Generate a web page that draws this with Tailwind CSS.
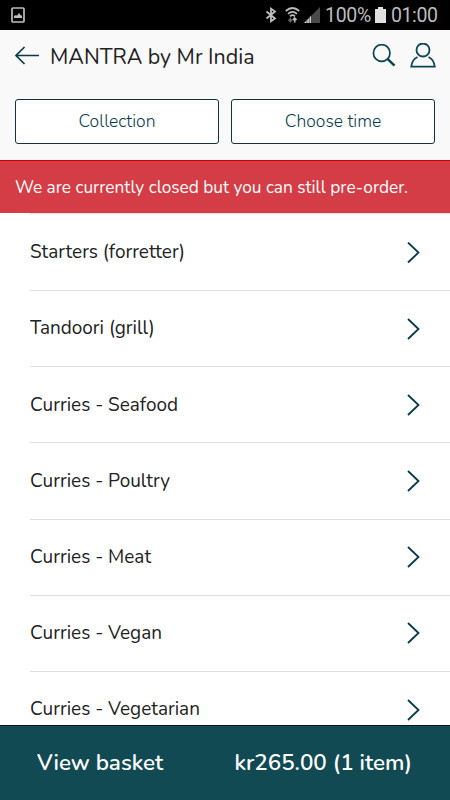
<!DOCTYPE html>
<html lang="en">
<head>
<meta charset="utf-8">
<title>MANTRA by Mr India</title>
<script src="https://cdn.jsdelivr.net/npm/@tailwindcss/browser@4"></script>
</head>
<body class="bg-white">
<div class="flex h-[800px] w-[450px] flex-col overflow-hidden bg-white font-['Nunito','Open_Sans',sans-serif] text-[#222]">
  <div class="flex h-[30px] shrink-0 items-center bg-black pl-[11px] pr-[12px] text-[#bdbdbd]">
    <svg class="h-4 w-[14px]" viewBox="0 0 14 16" fill="none"><rect x="1" y="1" width="12" height="14" rx="1" stroke="#bdbdbd" stroke-width="1.700"/><path d="M3 11V9l2-1 1 .7L8 6l1.400 2L11 8.700V11z" fill="#bdbdbd"/></svg>
    <svg class="ml-auto h-4 w-3" viewBox="0 0 12 16" fill="none" stroke="#bdbdbd" stroke-width="1.800"><path d="M1.500 4.500l8.500 7L6 14.300V1.700l4 2.800-8.500 7"/></svg>
    <svg class="ml-[8px] h-4 w-[15px]" viewBox="0 0 15 16" fill="none" stroke="#bdbdbd" stroke-width="1.700"><path d="M.8 4Q7.500-2 14.200 4M3 6.800q4.500-4 9 0M5 9.400q2.500-2.400 5 0"/><path d="M5.300 10.500v4M3.500 12.500l1.800 2 1.800-2" stroke="#666" stroke-width="1.600"/><path d="M9.700 15.500v-4M7.900 13l1.800-2 1.800 2" stroke-width="1.600"/></svg>
    <svg class="ml-[4px] h-4 w-4" viewBox="0 0 16 16"><path d="M16 0v16H0z" fill="#4a4a4a"/><path d="M7 9v7H0z" fill="#c8c8c8"/><path d="M2.800 12v4M5.300 9v7" stroke="#333" stroke-width=".6"/></svg>
    <span class="ml-[5px] mt-px w-[46px] whitespace-nowrap font-[Roboto] text-[19.500px] leading-[30px] tracking-[-0.300px]">100%</span>
    <svg class="ml-[4px] h-4 w-[11px]" viewBox="0 0 11 16"><path d="M3 0h5v2h3v14H0V2h3z" fill="#e0e0e0"/></svg>
    <span class="ml-[5px] mt-px w-[47px] whitespace-nowrap font-[Roboto] text-[19.500px] leading-[30px] tracking-[-0.400px]">01:00</span>
  </div>

  <header class="flex h-[130px] shrink-0 flex-col bg-[#f9f9f9]">
    <div class="flex h-[51px] items-center pl-[14px] pr-[14px]">
      <svg class="h-[20px] w-[26px]" viewBox="0 0 26 20" fill="none" stroke="#073b4b" stroke-width="1.700"><path d="M25 9.500H2M10.500 1L2 9.500l8.500 8.500"/></svg>
      <h1 class="ml-[10px] mt-[2px] whitespace-nowrap text-[21.400px] leading-[30px]">MANTRA by Mr India</h1>
      <svg class="ml-auto h-[24px] w-[24px]" viewBox="0 0 24 24" fill="none" stroke="#0b4552"><circle cx="9.700" cy="9" r="8.300" stroke-width="1.700"/><path d="M15.500 14.800l7 6.900" stroke-width="2.500"/></svg>
      <svg class="ml-[14px] h-[26px] w-[26px]" viewBox="0 0 26 26" fill="none" stroke="#0b4552" stroke-width="1.800"><circle cx="13" cy="7" r="6.500"/><path d="M7.500 14Q2 16.500 1.300 23.600H24.700Q24 16.500 18.500 14"/></svg>
    </div>
    <div class="mt-[18px] flex h-[45px] gap-[12px] px-[15px] text-[17.500px] font-light text-[#073b4b]">
      <button class="flex-1 rounded-[3px] border border-[#14323b] bg-white">Collection</button>
      <button class="flex-1 rounded-[3px] border border-[#14323b] bg-white">Choose time</button>
    </div>
  </header>

  <p class="flex h-[53px] shrink-0 items-center whitespace-nowrap border-t border-[#d0000b] bg-[#d43d45] px-[15px] pt-px text-[17.250px] text-white">We are currently closed but you can still pre-order.</p>

  <ul class="ml-[30px] min-h-0 flex-1 overflow-hidden border-t border-[#e4dede] text-[18.950px]">
    <li class="flex h-[77px] items-center justify-between border-b border-[#dedede] pr-[30px] pt-px"><span>Starters (forretter)</span><svg class="h-[22px] w-[13px]" viewBox="0 0 13 22" fill="none" stroke="#073b4b" stroke-width="1.800"><path d="M1 .5l10.500 10L1 20.500"/></svg></li>
    <li class="flex h-[76.200px] items-center justify-between border-b border-[#dedede] pr-[30px]"><span>Tandoori (grill)</span><svg class="h-[22px] w-[13px]" viewBox="0 0 13 22" fill="none" stroke="#073b4b" stroke-width="1.800"><path d="M1 1l10.500 10L1 21"/></svg></li>
    <li class="flex h-[76.200px] items-center justify-between border-b border-[#dedede] pr-[30px]"><span>Curries - Seafood</span><svg class="h-[22px] w-[13px]" viewBox="0 0 13 22" fill="none" stroke="#073b4b" stroke-width="1.800"><path d="M1 1l10.500 10L1 21"/></svg></li>
    <li class="flex h-[76.200px] items-center justify-between border-b border-[#dedede] pr-[30px]"><span>Curries - Poultry</span><svg class="h-[22px] w-[13px]" viewBox="0 0 13 22" fill="none" stroke="#073b4b" stroke-width="1.800"><path d="M1 1l10.500 10L1 21"/></svg></li>
    <li class="flex h-[76.200px] items-center justify-between border-b border-[#dedede] pr-[30px]"><span>Curries - Meat</span><svg class="h-[22px] w-[13px]" viewBox="0 0 13 22" fill="none" stroke="#073b4b" stroke-width="1.800"><path d="M1 1l10.500 10L1 21"/></svg></li>
    <li class="flex h-[76.200px] items-center justify-between border-b border-[#dedede] pr-[30px]"><span>Curries - Vegan</span><svg class="h-[22px] w-[13px]" viewBox="0 0 13 22" fill="none" stroke="#073b4b" stroke-width="1.800"><path d="M1 1l10.500 10L1 21"/></svg></li>
    <li class="flex h-[76.200px] items-center justify-between border-b border-[#dedede] pr-[30px]"><span>Curries - Vegetarian</span><svg class="h-[22px] w-[13px]" viewBox="0 0 13 22" fill="none" stroke="#073b4b" stroke-width="1.800"><path d="M1 1l10.500 10L1 21"/></svg></li>
  </ul>

  <footer class="flex h-[75px] shrink-0 items-center justify-between whitespace-nowrap border-t border-[#001820] bg-[#124a53] pl-[37px] pr-[38px] text-[22.400px] font-semibold text-white">
    <span>View basket</span><span>kr265.00 (1 item)</span>
  </footer>
</div>
</body>
</html>
